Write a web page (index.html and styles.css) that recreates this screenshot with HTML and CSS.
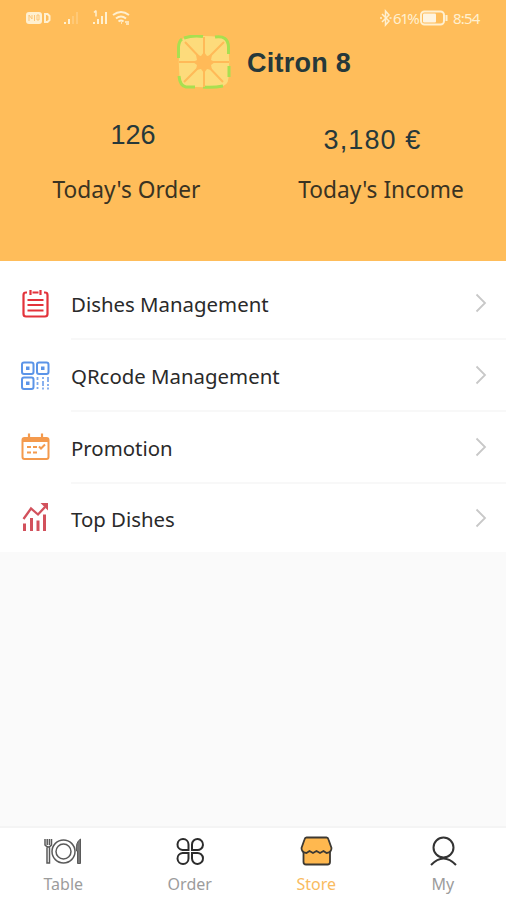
FILE: index.html
```html
<!DOCTYPE html>
<html lang="en">
<head>
<meta charset="utf-8">
<title>Citron 8</title>
<link rel="stylesheet" href="styles.css">
</head>
<body>
<div class="app">
  <header class="header">
    <div class="status">
      <svg class="status-left" width="110" height="20" viewBox="0 0 110 20" fill="none" stroke="#fff0d0">
        <rect x="1" y="4" width="16" height="12" rx="3" fill="#fff0d0" stroke="none"/>
        <path d="M4 13V7l3 4V7M9.500 7v6M12 7h2v5h-2z" stroke="#fdc577"/>
        <path d="M20 6h2.500l2 2v4l-2 2H20z" stroke-width="2"/>
        <path d="M40 14v2M44 11v5" stroke-width="2"/>
        <path d="M48 8v8M52 4v12" stroke-width="2" opacity=".25"/>
        <path d="M69 14v2M73 11v5M77 8v8M81 4v12" stroke-width="2"/>
        <path d="M71 2.500v6M69 4.500l2-2" stroke-width="1.500"/>
        <path d="M88 7q8-6 16 0M91 10.500q5-4 10 0M93.500 13.500q2.500-2 5 0" stroke-width="2"/>
        <path d="M96 15h1M100 14h4M101 16h3" stroke-width="1.500"/>
      </svg>
      <div class="status-right">
        <svg width="13" height="18" viewBox="0 0 13 18" fill="none" stroke="#fff0d0" stroke-width="1.500"><path d="M3 5l7 7-3.500 4V2L10 6l-7 7M1 9h2M10.500 9h2"/></svg>
        <span class="percent">61%</span>
        <svg class="battery" width="29" height="16" viewBox="0 0 29 16"><rect x="1" y="1.500" width="23" height="13" rx="3.500" fill="none" stroke="#fff0d0" stroke-width="2"/><rect x="3" y="3.500" width="13" height="9" rx="1" fill="#fff4df"/><path d="M26.500 5v6" stroke="#fff0d0" stroke-width="2"/></svg>
        <span class="clock">8:54</span>
      </div>
    </div>
    <div class="brand">
      <svg width="54" height="54" viewBox="0 0 54 54">
        <path d="M11 2Q27 0 43 2q8 .5 8.500 9 1.500 16 0 32-.5 8-8.500 8.500-16 1.500-32 0-8-.5-8.500-8.500-1.500-16 0-32Q3 2.500 11 2z" fill="#fddb7b"/>
        <path d="M7 3Q16 0 26 1.500M38 2Q51 0 51.500 12v7M52 31v11M46 51q-10 2-20 1M18 52H9q-6-1-7-11M1.500 23V12Q2 6 5 4" fill="none" stroke="#a8df50" stroke-width="3"/>
        <path d="M27 2v50M2 27h50M8 7l38 40M47 7L7 47" stroke="#ffba58" stroke-width="2"/>
        <path d="M27 17l3 4 5-1-1 5 4 2-4 3 1 5-5-1-3 4-3-4-5 1 1-5-4-3 4-2-1-5 5 1z" fill="#ffba58"/>
      </svg>
      <h1 class="brand-name">Citron 8</h1>
    </div>
    <div class="stats">
      <div class="stat stat-order"><div class="value">126</div><div class="label">Today's Order</div></div>
      <div class="stat stat-income"><div class="value">3,180 €</div><div class="label">Today's Income</div></div>
    </div>
  </header>
  <main class="menu">
    <div class="row">
      <svg class="icon" width="30" height="32" viewBox="0 0 30 32" fill="none" stroke="#e3333b" stroke-width="2.200"><path d="M7 4.500H6Q3.500 4.500 3.500 7v19q0 2.500 2.500 2.500h19q2.500 0 2.500-2.500V7q0-2.500-2.500-2.500h-1M12.500 4.500h6M10.500 2v5M20.500 2v5M7.500 12h16M7.500 17h16M7.500 22.500h16"/></svg>
      <div class="cell"><span class="text">Dishes Management</span><svg class="chevron" width="12" height="20" viewBox="0 0 12 20"><path d="M1.500 1.500L10 10l-8.500 8.500"/></svg></div>
    </div>
    <div class="row">
      <svg class="icon" width="30" height="32" viewBox="0 0 30 32" fill="none" stroke="#5b94e8" stroke-width="2"><rect x="2" y="2.500" width="11.500" height="11.500" rx="2"/><rect x="17" y="2.500" width="11.500" height="11.500" rx="2"/><rect x="2" y="17.500" width="11.500" height="11.500" rx="2"/><path d="M6 8.250h3.500M21 8.250h3.500M6 23.250h3.500" stroke-width="3.500"/><path d="M17.500 17v3m0 2v3m0 2v2M23 17v2m0 2v5m0 1.500v2M28 17v5m0 2v2m0 1.500v2" stroke-width="1.800" opacity=".8"/></svg>
      <div class="cell"><span class="text">QRcode Management</span><svg class="chevron" width="12" height="20" viewBox="0 0 12 20"><path d="M1.500 1.500L10 10l-8.500 8.500"/></svg></div>
    </div>
    <div class="row">
      <svg class="icon" width="30" height="32" viewBox="0 0 30 32" fill="none" stroke="#f49a4d" stroke-width="2"><rect x="2.500" y="6" width="26" height="21" rx="2"/><path d="M2.500 8h26" stroke-width="4"/><path d="M9 1.500v7M22 1.500v7" stroke-width="2.200"/><path d="M7 15h4m2 0h4M7 20.500h4m2 0h4m2-6l2 2 4-4" stroke-width="2"/></svg>
      <div class="cell"><span class="text">Promotion</span><svg class="chevron" width="12" height="20" viewBox="0 0 12 20"><path d="M1.500 1.500L10 10l-8.500 8.500"/></svg></div>
    </div>
    <div class="row">
      <svg class="icon" width="30" height="32" viewBox="0 0 30 32" fill="none" stroke="#d2515c" stroke-width="2.300"><path d="M3.500 17l7.500-10.500 7 6 7-7.500"/><path d="M20.500 1h7.500v7.500z" fill="#d2515c" stroke="none"/><path d="M4.500 21.500v7.500M11.500 16v13M18 18.500V29M24.500 12.500V29" stroke-width="3"/></svg>
      <div class="cell"><span class="text">Top Dishes</span><svg class="chevron" width="12" height="20" viewBox="0 0 12 20"><path d="M1.500 1.500L10 10l-8.500 8.500"/></svg></div>
    </div>
  </main>
  <nav class="tabs">
    <div class="tab">
      <svg width="40" height="32" viewBox="0 0 40 32" fill="none" stroke="#5a5a5a" stroke-width="1.500"><circle cx="20.500" cy="15.500" r="11.500"/><circle cx="20.500" cy="15.500" r="7.500"/><path d="M2 3v6q3.500 4 6.500 0V3M4.200 3v6M6.400 3v6M4 11.500V27h2.500V11.500"/><path d="M37.500 27.500h-3V15h-1q-1-9 4-12z" fill="#777" stroke-width="1"/></svg>
      <span>Table</span>
    </div>
    <div class="tab">
      <svg width="40" height="32" viewBox="0 0 40 32" fill="none" stroke="#2c2c2c" stroke-width="2"><path d="M18.500 14h-6a5.500 5.500 0 1 1 6-5.500zM22 14h5a5.500 5.500 0 1 0-5-5.500zM18.500 17h-6a5.500 5.500 0 1 0 6 5.500zM22 17h5a5.500 5.500 0 1 1-5 5.500z"/></svg>
      <span>Order</span>
    </div>
    <div class="tab active">
      <svg width="40" height="32" viewBox="0 0 40 32" fill="#ffb84f" stroke="#3d3933" stroke-width="1.800" stroke-linejoin="round"><path d="M7.500 14v12q0 2.500 2.500 2.500h21.500q2.500 0 2.500-2.500V14z"/><path d="M10.500 1.500h20q1.500 0 2 2l3 8.500q0 4.500-5 5l-3-2-3.500 2-3.500-2-3.500 2-3.500-2-3 2q-5-.5-5-5l3-8.500q.5-2 2-2z"/></svg>
      <span>Store</span>
    </div>
    <div class="tab">
      <svg width="40" height="32" viewBox="0 0 40 32" fill="none" stroke="#333" stroke-width="2"><circle cx="20.500" cy="11.500" r="10"/><path d="M8 29q12.500-13 25 0"/></svg>
      <span>My</span>
    </div>
  </nav>
</div>
</body>
</html>
```
FILE: styles.css
```css
* { box-sizing: border-box; }
body { margin: 0; font-family: "Noto Sans", sans-serif; }
.app { width: 506px; height: 900px; display: flex; flex-direction: column; background: #fafafa; overflow: hidden; }
.header { height: 261px; background: #ffbd5a; color: #26383a; }
.status { height: 35px; padding: 8px 24px 0 25px; display: flex; justify-content: space-between; color: #fff0d0; font-size: 15px; line-height: 20px; }
.status-right { display: flex; align-items: center; height: 20px; }
.status-right svg { flex: none; }
.percent { margin-left: 1px; letter-spacing: -1.4px; width: 26px; }
.battery { margin-left: 1px; }
.clock { margin-left: 4px; width: 29px; letter-spacing: -0.8px; }
.brand { height: 54px; padding-left: 177px; display: flex; align-items: center; gap: 16px; }
.brand-name { margin: 1px 0 0; font: bold 27px/32px "Liberation Sans", sans-serif; letter-spacing: 0.25px; }
.stats { display: flex; padding-top: 29px; }
.stat { width: 253px; text-align: center; white-space: nowrap; }
.value { height: 34px; font: 27px/34px "Liberation Sans", sans-serif; }
.label { color: #3a3322; font-size: 22.7px; line-height: 30px; }
.stat-order .value { padding-left: 13px; }
.stat-order .label { margin-top: 23px; }
.stat-income .value { margin-top: 5px; padding-right: 14px; letter-spacing: 1.1px; }
.stat-income .label { margin-top: 18px; padding-left: 3px; }
.menu { height: 291px; padding-top: 7px; background: #fff; }
.row { display: flex; align-items: center; height: 72px; padding-left: 20px; }
.row:last-child { height: 68px; }
.icon { flex: none; }
.cell { flex: 1; height: 100%; margin-left: 21px; padding-right: 19px; display: flex; align-items: center; justify-content: space-between; border-bottom: 2px solid #f8f8f8; }
.row:last-child .cell { border: 0; }
.text { color: #2a2a2a; font-size: 20.4px; line-height: 30px; white-space: nowrap; }
.row .text { padding-top: 1px; }
.chevron { fill: none; stroke: #c8c8c8; stroke-width: 1.8; }
.tabs { margin-top: auto; height: 74px; background: #fff; border-top: 2px solid #f4f4f4; display: flex; }
.tab { flex: 1; display: flex; flex-direction: column; align-items: center; padding-top: 8px; color: #9c9c9c; font-size: 16px; line-height: 22px; }
.tab svg { height: 32px; }
.tab span { margin-top: 5px; }
.tab.active { color: #f9bb60; }
```
